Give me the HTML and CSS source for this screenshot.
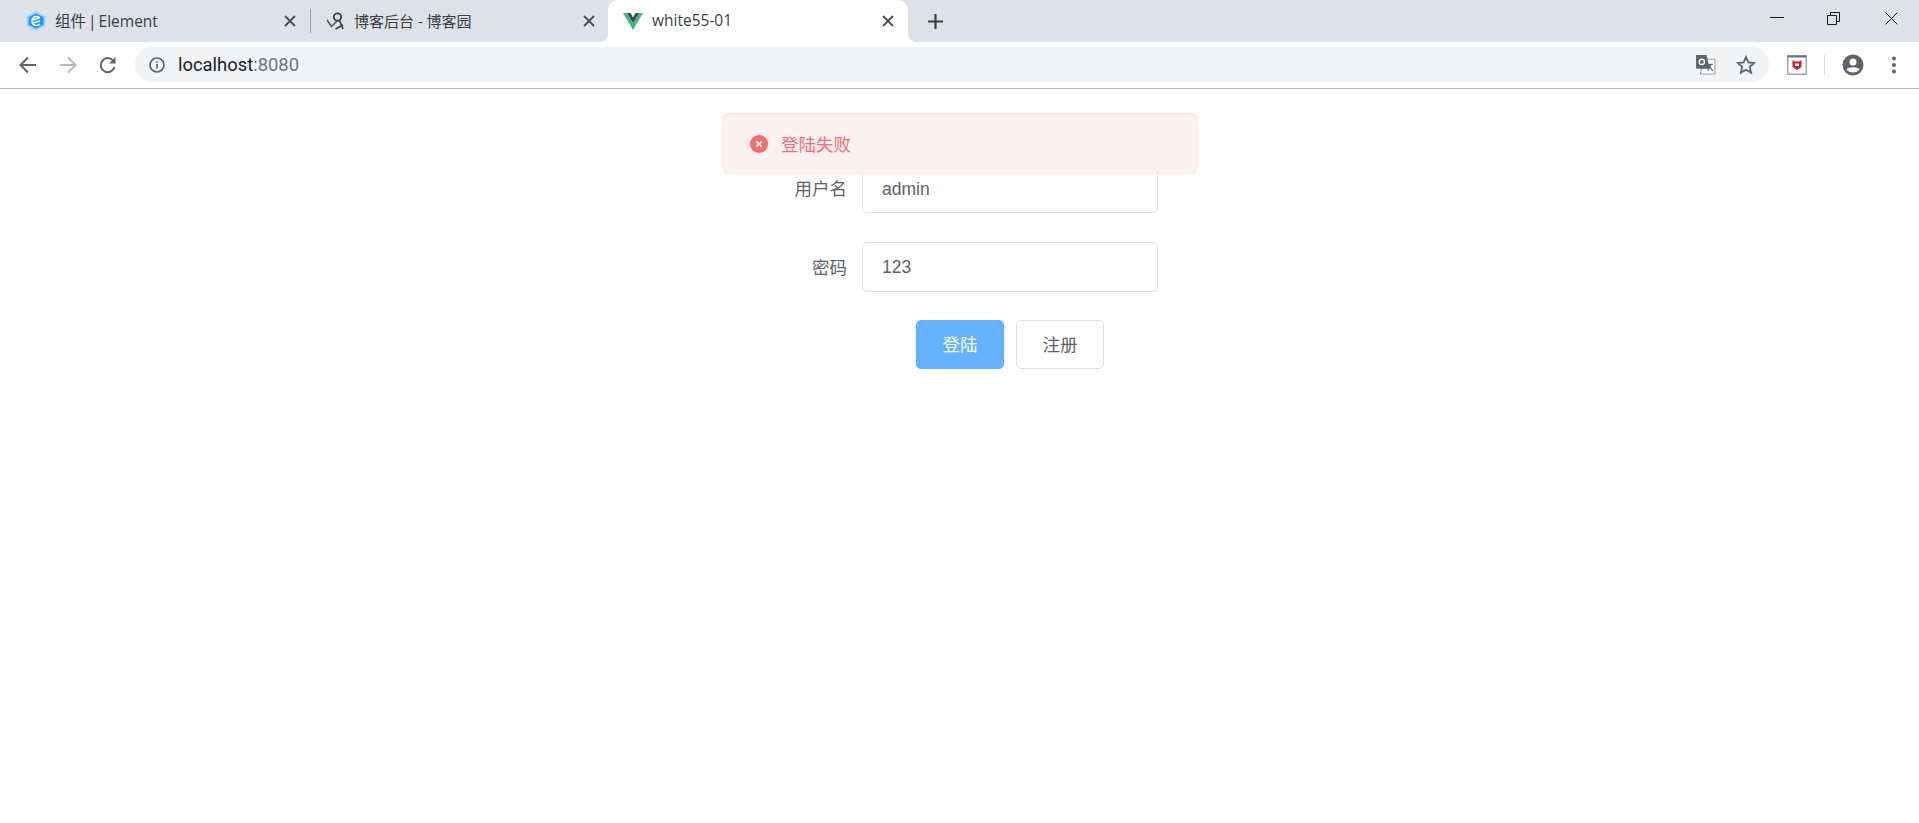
FILE: index.html
```html
<!DOCTYPE html>
<html lang="zh">
<head>
<meta charset="utf-8">
<title>white55-01</title>
<link rel="stylesheet" href="styles.css">
</head>
<body>
<header class="chrome">
  <div class="tabstrip">
    <div class="tab tab-first">
      <svg class="favicon" viewBox="0 0 20 20"><path d="M10 0l9.500 5v10L10 20 .5 15V5z" fill="#a3d6fa"/><path d="M10 2.200l7.500 4v7.600l-7.500 4-7.500-4V6.200z" fill="#2196f0"/><path d="M14 7a4.600 4.600 0 1 0 0 6M6.500 9l7-2M7 12l7-2" fill="none" stroke="#fff" stroke-width="1.500"/></svg>
      <span class="tab-title">组件 | Element</span>
      <svg class="tab-close" viewBox="0 0 12 12"><path d="M1 1l10 10M11 1L1 11"/></svg>
    </div>
    <div class="tab-sep"></div>
    <div class="tab tab-second">
      <svg class="favicon" viewBox="0 0 20 20"><path d="M1 9l4.500 6.500L11 10" fill="none" stroke="#55585c" stroke-width="1.600"/><circle cx="11.500" cy="6" r="3.700" fill="none" stroke="#3c4043" stroke-width="1.800"/><path d="M13.500 9.500L17 18M9.500 18l7.500-4" fill="none" stroke="#3c4043" stroke-width="1.700"/></svg>
      <span class="tab-title">博客后台 - 博客园</span>
      <svg class="tab-close" viewBox="0 0 12 12"><path d="M1 1l10 10M11 1L1 11"/></svg>
    </div>
    <div class="tab tab-active">
      <svg class="favicon" viewBox="0 0 20 18"><path d="M0 1h4l6 10 6-10h4L10 18z" fill="#41b883"/><path d="M4 1h3.500L10 5.500 12.500 1H16l-6 10z" fill="#35495e"/></svg>
      <span class="tab-title">white55-01</span>
      <svg class="tab-close" viewBox="0 0 12 12"><path d="M1 1l10 10M11 1L1 11"/></svg>
    </div>
    <svg class="new-tab" viewBox="0 0 15 15"><path d="M7.500 0v15M0 7.500h15"/></svg>
    <div class="window-controls">
      <svg class="win-icon win-min" viewBox="0 0 14 14"><path d="M0 5.500h14"/></svg>
      <svg class="win-icon win-restore" viewBox="0 0 13 13"><path d="M.5 3.500h9v9h-9zM3.500 3.500V.5h9v9h-3"/></svg>
      <svg class="win-icon win-close" viewBox="0 0 13 13"><path d="M.5.5l12 12M12.500.5l-12 12"/></svg>
    </div>
  </div>
  <div class="toolbar">
    <svg class="nav-icon" viewBox="0 0 18 18"><path d="M17 9H2M9 1.500L1.500 9 9 16.500" fill="none" stroke="#5f6368" stroke-width="2"/></svg>
    <svg class="nav-icon" viewBox="0 0 18 18"><path d="M1 9h15M9 1.500L16.500 9 9 16.500" fill="none" stroke="#b6b9bc" stroke-width="2"/></svg>
    <svg class="nav-icon" viewBox="0 0 18 18"><path d="M15.500 11a7 7 0 1 1-1.400-6.400" fill="none" stroke="#5f6368" stroke-width="2"/><path d="M16.500 1v6.500H10z" fill="#5f6368"/></svg>
    <div class="omnibox">
      <svg class="info-icon" viewBox="0 0 16 16"><circle cx="8" cy="8" r="7" fill="none" stroke="#5f6368" stroke-width="1.700"/><path d="M8 7v4.500M8 4.200v1.600" stroke="#5f6368" stroke-width="1.700"/></svg>
      <span class="url"><span class="url-host">localhost</span><span class="url-port">:8080</span></span>
      <svg class="translate-icon" viewBox="0 0 20 20"><path d="M9 5h10v14H5z" fill="#fff" stroke="#9a9da0"/><path d="M1 1h10l3 13H1z" fill="#5f6368"/><circle cx="6.500" cy="7.500" r="2.500" fill="none" stroke="#fff" stroke-width="1.300"/><path d="M11 10h6M15 10l-3 6M13 11l4 5" fill="none" stroke="#5f6368" stroke-width="1.200"/></svg>
      <svg class="star-icon" viewBox="0 0 20 20"><path d="M10 2l2.400 5.400 5.800.6-4.400 3.900 1.300 5.700L10 14.700l-5.100 2.900 1.300-5.700L1.800 8l5.800-.6z" fill="none" stroke="#5f6368" stroke-width="1.800"/></svg>
    </div>
    <svg class="ext-icon" viewBox="0 0 20 20"><rect x=".75" y=".75" width="18.500" height="18.500" fill="#fff" stroke="#9aa8a8" stroke-width="1.500"/><path d="M.75 1.500h18.500" stroke="#5f7c7c" stroke-width="2"/><path d="M5.500 5l2.200 1.500h4.600L14.500 5v7L10 15l-4.500-3z" fill="#c8232c"/><path d="M8 8.500h4v2.500H8z" fill="#fff"/></svg>
    <div class="toolbar-sep"></div>
    <svg class="profile-icon" viewBox="0 0 22 22"><circle cx="11" cy="11" r="10.500" fill="#5f6368"/><circle cx="11" cy="8" r="3.500" fill="#fff"/><path d="M4.500 15.500c2-3 11-3 13 0-1.500 2-4 3-6.500 3s-5-1-6.500-3z" fill="#fff"/></svg>
    <svg class="menu-icon" viewBox="0 0 4 18"><circle cx="2" cy="2.500" r="2" fill="#5f6368"/><circle cx="2" cy="9" r="2" fill="#5f6368"/><circle cx="2" cy="15.500" r="2" fill="#5f6368"/></svg>
  </div>
</header>

<main class="page">
  <div class="alert">
    <svg class="alert-icon" viewBox="0 0 18 18"><circle cx="9" cy="9" r="9" fill="#f56c6c"/><path d="M6.300 6.300l5.400 5.400M11.700 6.300l-5.400 5.400" stroke="#fff" stroke-width="1.700"/></svg>
    <span class="alert-text">登陆失败</span>
  </div>
  <form class="login-form">
    <div class="form-row">
      <label class="form-label">用户名</label>
      <input class="form-input form-input-lowered" type="text" value="admin">
    </div>
    <div class="form-row">
      <label class="form-label">密码</label>
      <input class="form-input" type="text" value="123">
    </div>
    <div class="form-actions">
      <button class="btn btn-primary" type="button">登陆</button>
      <button class="btn" type="button">注册</button>
    </div>
  </form>
</main>
</body>
</html>
```
FILE: styles.css
```css
* { box-sizing: border-box; }
html, body { margin: 0; height: 100%; background: #fff; overflow: hidden; }
body { font-family: "Liberation Sans", "Noto Sans CJK SC", sans-serif; color: #606266; }

.chrome { display: flex; flex-direction: column; }

.tabstrip {
  display: flex;
  align-items: center;
  height: 42px;
  background: #dee1e6;
}
.tab {
  display: flex;
  align-items: center;
  height: 42px;
  font: 15.500px "Open Sans", "Noto Sans CJK SC", sans-serif;
  color: #3c4043;
}
.tab-title { flex: 1; padding-bottom: 2px; white-space: nowrap; overflow: hidden; }
.favicon { display: block; flex: none; width: 20px; height: 20px; }
.tab-close { flex: none; width: 12px; height: 12px; fill: none; stroke: #494c50; stroke-width: 1.800; }

.tab-first { width: 310px; padding: 0 14px 0 26px; }
.tab-first .tab-title { margin-left: 9px; word-spacing: -2px; }
.tab-sep { flex: none; width: 1px; height: 24px; background: #9b9ea3; }
.tab-second { width: 297px; padding: 0 13px 0 15px; }
.tab-second .tab-title { margin-left: 8px; font-size: 15px; }
.tab-active {
  position: relative;
  width: 300px;
  padding: 0 14px 0 15px;
  background: #fff;
  border-radius: 10px 10px 0 0;
}
.tab-active .favicon { height: 18px; }
.tab-active .tab-title { margin-left: 9px; }
.tab-active::before, .tab-active::after {
  content: "";
  position: absolute;
  bottom: 0;
  width: 8px;
  height: 8px;
}
.tab-active::before { left: -8px; background: radial-gradient(circle at 0 0, transparent 7.500px, #fff 8px); }
.tab-active::after { right: -8px; background: radial-gradient(circle at 100% 0, transparent 7.500px, #fff 8px); }

.new-tab { flex: none; width: 15px; height: 15px; margin-left: 20px; fill: none; stroke: #3c4043; stroke-width: 2.200; }
.window-controls { display: flex; margin-left: auto; margin-right: 21px; align-self: flex-start; margin-top: 12px; }
.win-icon { display: block; fill: none; stroke: #1a1a1a; stroke-width: 1; }
.win-min { width: 14px; height: 14px; }
.win-restore { width: 13px; height: 13px; margin-left: 43px; }
.win-close { width: 13px; height: 13px; margin-left: 45px; }

.toolbar {
  display: flex;
  align-items: center;
  height: 47px;
  padding: 0 25px 1px 19px;
  background: #fff;
  border-bottom: 1px solid #b4b4b4;
}
.nav-icon { display: block; flex: none; width: 18px; height: 18px; margin-right: 22px; }
.nav-icon:nth-child(3) { margin-right: 18px; }
.omnibox {
  display: flex;
  align-items: center;
  flex: none;
  width: 1634px;
  height: 35px;
  padding: 0 11px 0 14px;
  border-radius: 18px;
  background: #f1f3f4;
}
.info-icon { flex: none; width: 16px; height: 16px; }
.url { flex: 1; margin-left: 13px; font: 18.400px "Roboto", sans-serif; white-space: nowrap; }
.url-host { color: #202124; }
.url-port { color: #70757a; }
.translate-icon { flex: none; width: 21px; height: 21px; }
.star-icon { flex: none; width: 20px; height: 20px; margin-left: 20px; margin-right: 2px; }
.ext-icon { flex: none; width: 20px; height: 20px; margin-left: 18px; }
.toolbar-sep { flex: none; width: 1px; height: 20px; margin-left: 17px; background: #dadce0; }
.profile-icon { flex: none; width: 22px; height: 22px; margin-left: 17px; }
.menu-icon { flex: none; width: 4px; height: 18px; margin-left: 28px; }

.page { position: relative; padding-top: 74px; }
.alert {
  position: absolute;
  top: 24px;
  left: 722px;
  display: flex;
  align-items: center;
  width: 476px;
  height: 61px;
  padding-left: 27px;
  background: #fdf0f0;
  border: 1px solid #fde8e8;
  border-radius: 6px;
  z-index: 2;
}
.alert-icon { flex: none; width: 18px; height: 18px; }
.alert-text { margin-left: 13px; font-size: 17.500px; color: #ec7077; }

.login-form { display: flex; flex-direction: column; gap: 29px; width: 445px; margin: 0 auto; padding-right: 24px; }
.form-row { display: flex; align-items: center; }
.form-label { flex: none; width: 125px; padding-right: 15px; padding-bottom: 2px; text-align: right; font-size: 17.500px; color: #606266; }
.form-input {
  flex: none;
  width: 296px;
  height: 50px;
  padding: 0 18px 0 19px;
  border: 1px solid #dcdfe6;
  border-radius: 5px;
  background: #fff;
  font: 17.500px "Liberation Sans", sans-serif;
  color: #606266;
  outline: none;
}
.form-input-lowered { padding-top: 3px; }
.form-actions { display: flex; justify-content: center; gap: 12px; padding-left: 125px; margin-top: -1px; }
.btn {
  width: 88px;
  height: 49px;
  padding: 0 0 3px;
  border: 1px solid #dcdfe6;
  border-radius: 5px;
  background: #fff;
  font: 17.500px "Noto Sans CJK SC", sans-serif;
  color: #606266;
}
.btn-primary { border-color: #66b1ff; background: #66b1ff; color: #fff; }
```
